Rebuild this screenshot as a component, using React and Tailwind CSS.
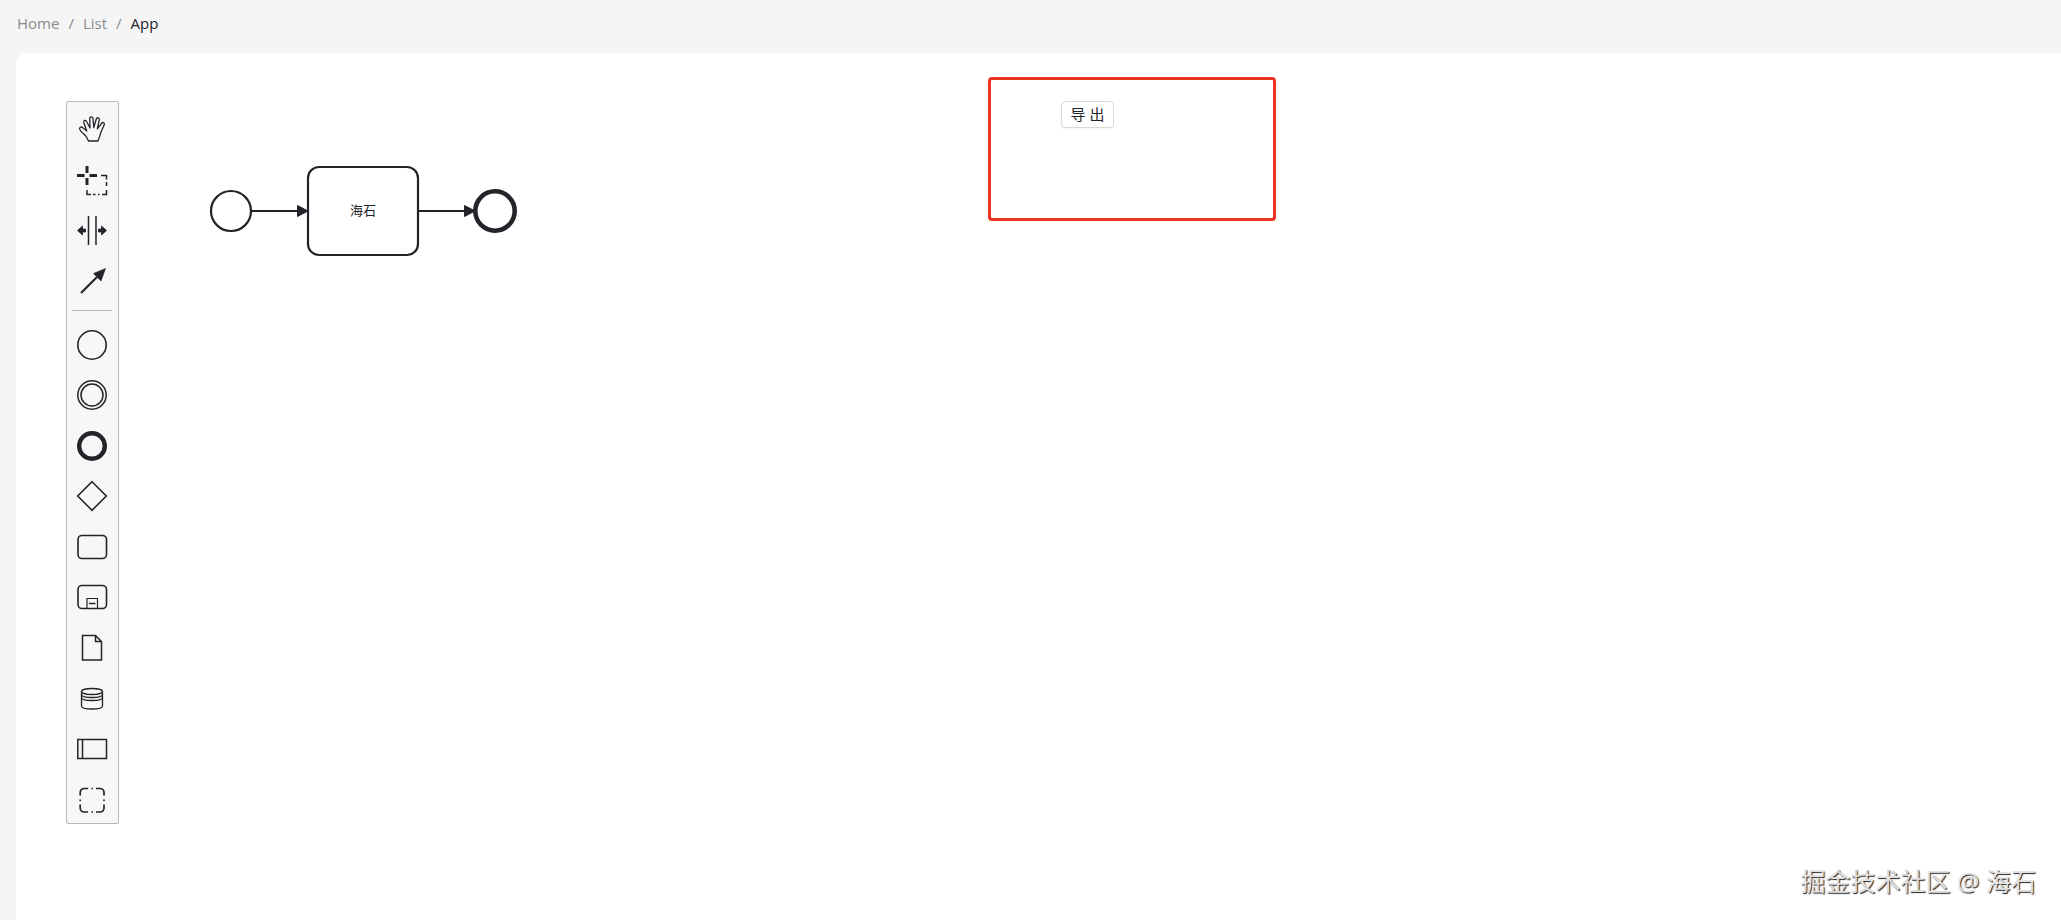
import React, { useState } from "react";

// Palette icons share one 40x40 grid
const icons = {
    hand: (
        <path
            d="M16.500 32L14.500 28C12.500 25 9.500 24 7.800 20.500C7 18.500 9 17.300 10.500 18.500L14.800 22L11.800 13.500C11.300 11.300 13.800 10.500 14.600 12.500L18 19L17.800 9.500C17.800 7.200 20.800 7.200 21 9.500L21.800 18.500L24.300 10C25 8 27.800 8.600 27.300 10.800L25.300 19.800L29.600 14.300C31 12.600 33 13.900 32.200 15.800L29 23C28 26 27.500 28.500 26 32Z"
            fill="none"
            stroke="#22242a"
            strokeWidth="1.300"
            strokeLinejoin="round"
        />
    ),
    lasso: (
        <g fill="none" stroke="#22242a">
            <path d="M15 6v7M15 18v7M5 15.500h7.500M17.500 15.500H25" strokeWidth="3" />
            <path d="M29 15.500h5.500v4M34.500 22v4M34.500 30v4.500h-4.500M27.500 34.500h-1.500M23.500 34.500h-2.500M19 34.500h-4v-4.500" strokeWidth="1.500" />
        </g>
    ),
    space: (
        <g stroke="#22242a" fill="#22242a">
            <path d="M16.500 6v29M24 6v29" strokeWidth="1.500" />
            <path d="M5.500 20.500l5-4.500v3h3v3h-3v3zM34.500 20.500l-5-4.500v3h-3v3h3v3z" strokeWidth="0.800" />
        </g>
    ),
    connect: (
        <g stroke="#22242a" fill="#22242a">
            <path d="M9 32L25 16" strokeWidth="2.200" />
            <path d="M33.500 7.500l-4.500 12.500-7.500-7.500z" strokeWidth="0.600" />
        </g>
    ),
    start: <circle cx="20" cy="20" r="14.200" fill="none" stroke="#22242a" strokeWidth="1.600" />,
    intermediate: (
        <g fill="none" stroke="#22242a" strokeWidth="1.500">
            <circle cx="20" cy="20" r="14.200" />
            <circle cx="20" cy="20" r="11" />
        </g>
    ),
    end: <circle cx="20" cy="20" r="12.800" fill="none" stroke="#22242a" strokeWidth="4.400" />,
    gateway: <path d="M20 5.700L34.300 20 20 34.300 5.700 20z" fill="none" stroke="#22242a" strokeWidth="1.600" />,
    task: <rect x="6" y="8.500" width="28.500" height="23" rx="4" fill="none" stroke="#22242a" strokeWidth="1.600" />,
    subprocess: (
        <g fill="none" stroke="#22242a">
            <rect x="6" y="8.500" width="28.500" height="23" rx="4" strokeWidth="1.600" />
            <path d="M15 31.500V21.500h10.500v10" strokeWidth="1.200" />
            <path d="M17 26.500h6.500" strokeWidth="1.500" />
        </g>
    ),
    dataObject: (
        <path
            d="M10.500 7.500h13l6 6V32h-19zM23.500 7.500v6h6"
            fill="none"
            stroke="#22242a"
            strokeWidth="1.500"
        />
    ),
    dataStore: (
        <g fill="none" stroke="#22242a" strokeWidth="1.300">
            <ellipse cx="20" cy="12.500" rx="10.500" ry="3" />
            <path d="M9.500 12.500V27c0 1.800 4.700 3 10.500 3s10.500-1.200 10.500-3V12.500" />
            <path d="M9.500 15.500c0 1.800 4.700 3 10.500 3s10.500-1.200 10.500-3M9.500 18.500c0 1.800 4.700 3 10.500 3s10.500-1.200 10.500-3" />
        </g>
    ),
    participant: (
        <path d="M5.800 10.500h28.700v19H5.800zM10.500 10.500v19" fill="none" stroke="#22242a" strokeWidth="1.500" />
    ),
    group: (
        <path
            d="M8.200 15.500v-3a4 4 0 0 1 4-4h4M24 8.500h4a4 4 0 0 1 4 4v3M32 24.500V28a4 4 0 0 1-4 4h-4M16 32h-3.800a4 4 0 0 1-4-4v-3.500M19.500 8.500H21M19.500 32H21M8.200 19.500v1.500M32 19.500v1.500"
            fill="none"
            stroke="#22242a"
            strokeWidth="1.700"
        />
    ),
};

const tools = [
    { id: "hand", title: "Activate hand tool" },
    { id: "lasso", title: "Activate lasso tool" },
    { id: "space", title: "Activate create/remove space tool" },
    { id: "connect", title: "Activate global connect tool" },
];

const elements = [
    { id: "start", title: "Create start event" },
    { id: "intermediate", title: "Create intermediate event" },
    { id: "end", title: "Create end event" },
    { id: "gateway", title: "Create gateway" },
    { id: "task", title: "Create task" },
    { id: "subprocess", title: "Create expanded sub-process" },
    { id: "dataObject", title: "Create data object" },
    { id: "dataStore", title: "Create data store" },
    { id: "participant", title: "Create pool" },
    { id: "group", title: "Create group" },
];

const PaletteEntry = ({ entry, onSelect }) => (
    <button
        type="button"
        title={entry.title}
        aria-label={entry.title}
        onClick={() => onSelect(entry.id)}
        className="flex flex-1 items-center justify-center pt-1 pr-px"
    >
        <svg viewBox="0 0 40 40" className="w-10 h-10">
            {icons[entry.id]}
        </svg>
    </button>
);

const Palette = ({ onSelect }) => (
    <div className="flex flex-col w-[53px] h-[723px] shrink-0 bg-[#f7f7f7] border border-[#b8babd] rounded-xs">
        {tools.map((entry) => (
            <PaletteEntry key={entry.id} entry={entry} onSelect={onSelect} />
        ))}
        <hr className="ml-[5px] mr-[6px] my-[6px] border-[#b8babd]" />
        {elements.map((entry) => (
            <PaletteEntry key={entry.id} entry={entry} onSelect={onSelect} />
        ))}
    </div>
);

const Diagram = () => (
    <svg
        viewBox="0 0 310 92"
        className="w-[310px] h-[92px] mt-16 ml-[90px] shrink-0"
        fill="none"
        stroke="#22242a"
        strokeWidth="2.200"
    >
        <circle cx="22" cy="46" r="20" />
        <path d="M42 46h48" />
        <path d="M88.500 40.500L99 46l-10.500 5.500z" fill="#22242a" strokeWidth="1" />
        <rect x="99" y="2" width="110" height="88" rx="11" />
        <text
            x="154"
            y="50"
            textAnchor="middle"
            fill="#22242a"
            stroke="none"
            className="text-[13px] font-['Noto_Sans_CJK_SC',sans-serif]"
        >
            海石
        </text>
        <path d="M209 46h48" />
        <path d="M255.500 40.500L266 46l-10.500 5.500z" fill="#22242a" strokeWidth="1" />
        <circle cx="286" cy="46" r="19.700" strokeWidth="4.600" />
    </svg>
);

const App = () => {
    const [activeTool, setActiveTool] = useState(null);

    const handleExport = () => {
        console.log("export diagram", activeTool);
    };

    return (
        <div className="flex flex-col min-h-screen bg-[#f5f5f5] text-[#22242a] font-['Open_Sans','Noto_Sans_CJK_SC',sans-serif]">
            <nav aria-label="Breadcrumb" className="px-[17px] pt-[11px] pb-[18px]">
                <ol className="flex gap-[9px] text-[15px] leading-6 text-[#8a8a8a]">
                    <li><a href="#home">Home</a></li>
                    <li aria-hidden="true">/</li>
                    <li><a href="#list">List</a></li>
                    <li aria-hidden="true">/</li>
                    <li className="text-[#22242a]">App</li>
                </ol>
            </nav>

            <main className="relative flex-1 ml-4 pt-12 pl-[50px] pr-[5px] bg-white rounded-tl-xl">
                <div className="grid grid-cols-2">
                    <div className="flex items-start">
                        <Palette onSelect={setActiveTool} />
                        <Diagram />
                    </div>
                    <div className="relative">
                        <button
                            type="button"
                            onClick={handleExport}
                            className="block w-[53px] h-[27px] text-[15px] leading-none bg-white border border-[#d9d9d9] rounded shadow-[0_2px_0_rgba(0,0,0,0.02)]"
                        >
                            导 出
                        </button>
                        {/* highlight around the export area */}
                        <div className="absolute -left-[73px] -top-6 w-[288px] h-[144px] border-3 border-[#ec3323] rounded pointer-events-none" />
                    </div>
                </div>
                <div className="absolute right-[25px] bottom-[21px] text-[25px] leading-9 text-[#e0e0e0] [text-shadow:1px_1px_1px_#222] whitespace-nowrap">
                    掘金技术社区 @ 海石
                </div>
            </main>
        </div>
    );
};

export default App;
